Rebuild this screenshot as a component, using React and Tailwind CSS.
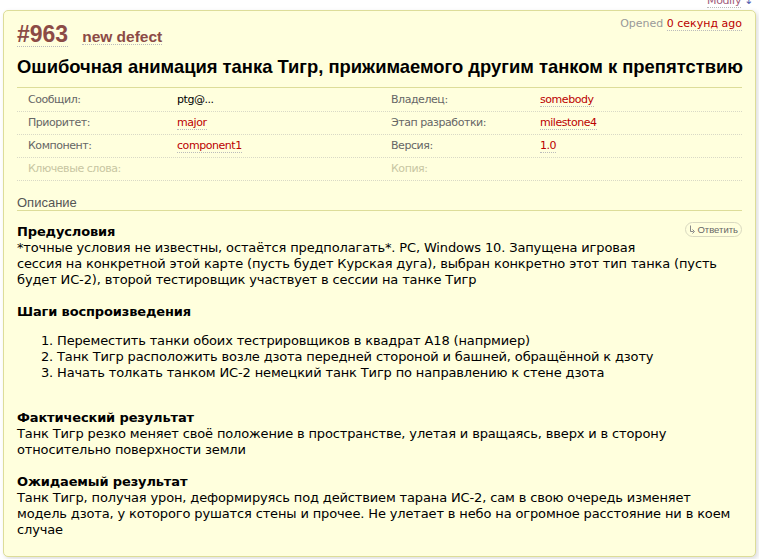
import React from 'react';

const props = [
    ['Сообщил:', 'ptg@...', false, 'Владелец:', 'somebody', true],
    ['Приоритет:', 'major', true, 'Этап разработки:', 'milestone4', true],
    ['Компонент:', 'component1', true, 'Версия:', '1.0', true],
];

const Value = ({ text, link }) =>
    link ? (
        <span className="text-[#b00] border-b border-dotted border-[#bbb] leading-[13px]">{text}</span>
    ) : (
        <span className="text-black">{text}</span>
    );

const ReplyIcon = () => (
    <svg width="6" height="9" viewBox="0 0 6 9" className="mr-[2px]">
        <path d="M1.5 0.5 V6.5 H4.5" stroke="#888" strokeWidth="1" fill="none" />
        <path d="M3.5 4.5 L5.5 6.5 L3.5 8.5" stroke="#888" strokeWidth="1" fill="none" />
    </svg>
);

export default function App() {
    return (
        <div className="min-h-screen bg-white text-[13px] text-black font-['DejaVu_Sans',Verdana,sans-serif]">
            {/* Modify link, cut off by the top of the window */}
            <div className="h-[10px] overflow-hidden flex justify-end pr-[6px]">
                <span className="-mt-[6px] text-[11px] leading-[13px] tracking-[-0.4px] text-[#a05a7a]">
                    <span className="border-b border-dotted border-[#bbb]">Modify</span>
                    <span className="ml-[3px] text-[#5560b0]">↓</span>
                </span>
            </div>

            {/* Ticket box */}
            <div className="mx-[3px] bg-[#ffffdd] border border-[#dddd99] rounded-[5px] shadow-[2px_2px_5px_#ddd] px-[13px] pt-[6px] pb-[18px]">
                <div className="flex items-start justify-between">
                    <div className="mt-[5px] flex items-baseline gap-[14px] font-['Liberation_Sans',Arial,sans-serif] font-bold text-[#8c4b46]">
                        <span className="text-[23px] leading-[24px] border-b border-dotted border-[#bbb]">#963</span>
                        <span className="text-[15.5px] leading-[15px] border-b border-dotted border-[#bbb]">new defect</span>
                    </div>
                    <div className="text-[11px] leading-[13px] text-[#999]">
                        Opened{' '}
                        <span className="text-[#b00] border-b border-dotted border-[#bbb]">0 секунд ago</span>
                    </div>
                </div>

                <h2 className="mt-[9px] font-['Liberation_Sans',Arial,sans-serif] font-bold text-[18.4px] leading-[22px] text-black whitespace-nowrap">
                    Ошибочная анимация танка Тигр, прижимаемого другим танком к препятствию
                </h2>

                {/* Properties */}
                <div className="mt-[9px] border-t border-[#dddd99] pt-[1px] text-[11px] tracking-[-0.45px]">
                    {props.map((r) => (
                        <div key={r[0]} className="h-[23px] border-b border-dotted border-[#d9d9c6] pl-[11px] grid grid-cols-[149px_214px_149px_1fr] items-center">
                            <span className="text-[#666]">{r[0]}</span>
                            <span><Value text={r[1]} link={r[2]} /></span>
                            <span className="text-[#666]">{r[3]}</span>
                            <span><Value text={r[4]} link={r[5]} /></span>
                        </div>
                    ))}
                    <div className="h-[23px] border-b border-dotted border-[#d9d9c6] pl-[11px] grid grid-cols-[149px_214px_149px_1fr] items-center">
                        <span className="text-[#c8c6a2]">Ключевые слова:</span>
                        <span />
                        <span className="text-[#c8c6a2]">Копия:</span>
                        <span />
                    </div>
                </div>

                <h3 className="mt-[15px] font-['Liberation_Sans',Arial,sans-serif] text-[13px] leading-[14px] text-[#555] border-b border-[#dddd99]">
                    Описание
                </h3>

                {/* Description */}
                <div className="pt-[13px] leading-[16px] tracking-[-0.14px]">
                    <div className="float-right -mt-[2px] h-[15px] px-[3px] flex items-center rounded-full border border-[#d9d9c0] font-['Liberation_Sans',Arial,sans-serif] text-[9.5px] tracking-normal text-[#666]">
                        <ReplyIcon />
                        Ответить
                    </div>

                    <p className="whitespace-nowrap">
                        <strong>Предусловия</strong>
                        <br />
                        *точные условия не известны, остаётся предполагать*. PC, Windows 10. Запущена игровая
                        <br />
                        сессия на конкретной этой карте (пусть будет Курская дуга), выбран конкретно этот тип танка (пусть
                        <br />
                        будет ИС-2), второй тестировщик участвует в сессии на танке Тигр
                    </p>

                    <p className="mt-[16px] font-bold">Шаги воспроизведения</p>
                    <ol className="mt-[13px] pl-[40px] list-decimal whitespace-nowrap">
                        <li>Переместить танки обоих тестрировщиков в квадрат A18 (напрмиер)</li>
                        <li>Танк Тигр расположить возле дзота передней стороной и башней, обращённой к дзоту</li>
                        <li>Начать толкать танком ИС-2 немецкий танк Тигр по направлению к стене дзота</li>
                    </ol>

                    <p className="mt-[29px] whitespace-nowrap">
                        <strong>Фактический результат</strong>
                        <br />
                        Танк Тигр резко меняет своё положение в пространстве, улетая и вращаясь, вверх и в сторону
                        <br />
                        относительно поверхности земли
                    </p>

                    <p className="mt-[16px] whitespace-nowrap">
                        <strong>Ожидаемый результат</strong>
                        <br />
                        Танк Тигр, получая урон, деформируясь под действием тарана ИС-2, сам в свою очередь изменяет
                        <br />
                        модель дзота, у которого рушатся стены и прочее. Не улетает в небо на огромное расстояние ни в коем
                        <br />
                        случае
                    </p>
                </div>
            </div>
        </div>
    );
}
